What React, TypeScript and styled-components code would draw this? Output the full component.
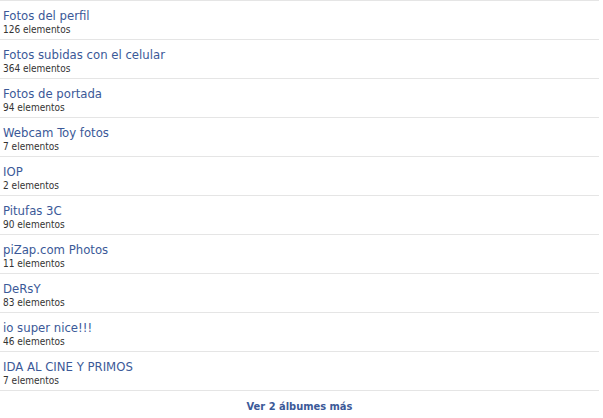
import React from "react";
import styled, { createGlobalStyle } from "styled-components";

const Global = createGlobalStyle`
  html, body { margin: 0; padding: 0; background: #fff; }
  body { font-family: "DejaVu Sans Condensed", "DejaVu Sans", Tahoma, sans-serif; }
`;

const List = styled.div`
  width: 599px;
  display: flex;
  flex-direction: column;
`;

const Row = styled.a`
  display: flex;
  flex-direction: column;
  border-top: 1px solid #e5e5e5;
  padding: 6px 3px 0;
  box-sizing: border-box;
  height: 39px;
  text-decoration: none;
`;

const Title = styled.span`
  font-size: 13px;
  line-height: 17px;
  color: #3b5998;
`;

const Count = styled.span`
  font-size: 10px;
  line-height: 12px;
  color: #333;
`;

const Footer = styled.div`
  border-top: 1px solid #e5e5e5;
  display: flex;
  justify-content: center;
  padding-top: 8px;
  height: 28px;
  box-sizing: border-box;
`;

const More = styled.a`
  font-size: 11px;
  font-weight: bold;
  line-height: 16px;
  color: #3b5998;
  text-decoration: none;
`;

const albums: [string, number][] = [
  ["Fotos del perfil", 126],
  ["Fotos subidas con el celular", 364],
  ["Fotos de portada", 94],
  ["Webcam Toy fotos", 7],
  ["IOP", 2],
  ["Pitufas 3C", 90],
  ["piZap.com Photos", 11],
  ["DeRsY", 83],
  ["io super nice!!!", 46],
  ["IDA AL CINE Y PRIMOS", 7],
];

export default function App() {
  return (
    <>
      <Global />
      <List>
        {albums.map(([name, n]) => (
          <Row key={name}>
            <Title>{name}</Title>
            <Count>{n} elementos</Count>
          </Row>
        ))}
        <Footer>
          <More>Ver 2 álbumes más</More>
        </Footer>
      </List>
    </>
  );
}
